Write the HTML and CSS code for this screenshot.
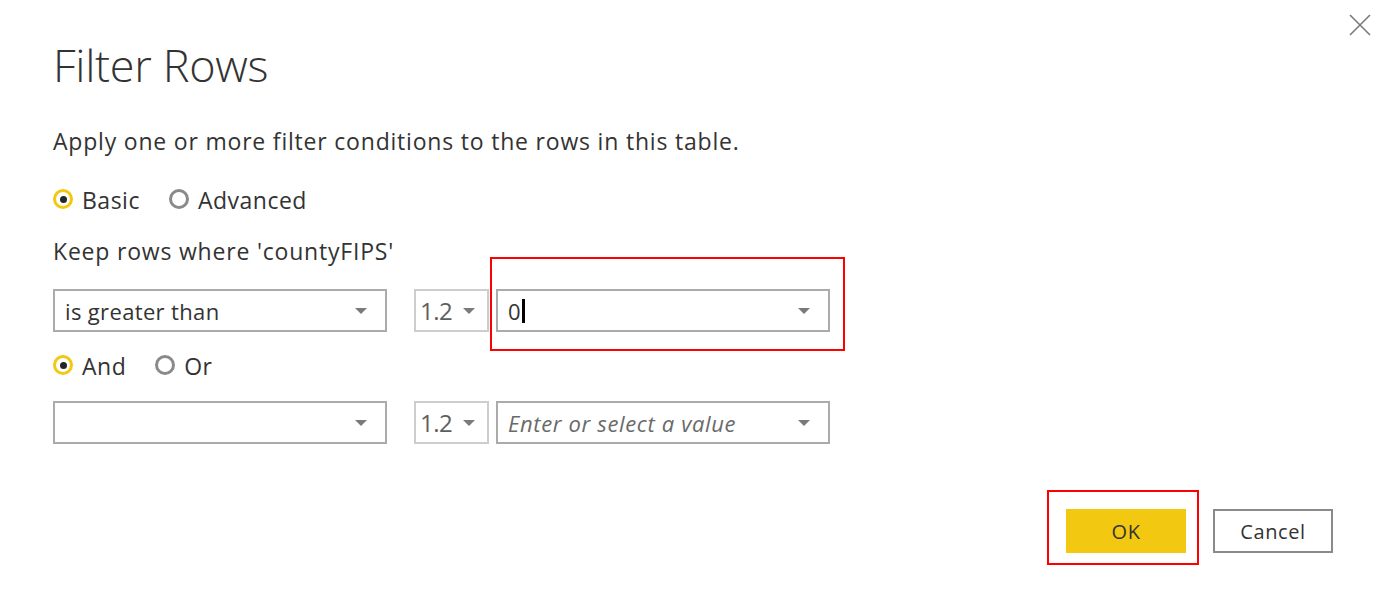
FILE: index.html
```html
<!DOCTYPE html>
<html lang="en">
<head>
<meta charset="utf-8">
<title>Filter Rows</title>
<link rel="stylesheet" href="styles.css">
</head>
<body>
<div class="dialog">
  <button class="close" aria-label="Close">
    <svg width="22" height="22" viewBox="0 0 22 22"><path d="M1 1 L21 21 M21 1 L1 21" stroke="#7a7a7a" stroke-width="1.6" fill="none"/></svg>
  </button>
  <h1 class="title">Filter Rows</h1>
  <p class="desc">Apply one or more filter conditions to the rows in this table.</p>
  <div class="radios first">
    <label class="radio"><span class="dot on"></span>Basic</label>
    <label class="radio"><span class="dot"></span>Advanced</label>
  </div>
  <p class="keep">Keep rows where 'countyFIPS'</p>
  <div class="cond-row">
    <div class="select op"><span class="val">is greater than</span><span class="caret"></span></div>
    <div class="select type"><span class="num">1.2</span><span class="caret"></span></div>
    <div class="value-wrap">
      <div class="select value"><span class="val">0</span><span class="cursor"></span><span class="caret"></span></div>
      <div class="mark mark-value"></div>
    </div>
  </div>
  <div class="radios second">
    <label class="radio"><span class="dot on"></span>And</label>
    <label class="radio"><span class="dot"></span>Or</label>
  </div>
  <div class="cond-row">
    <div class="select op"><span class="val"></span><span class="caret"></span></div>
    <div class="select type"><span class="num">1.2</span><span class="caret"></span></div>
    <div class="value-wrap">
      <div class="select value"><span class="val placeholder">Enter or select a value</span><span class="caret"></span></div>
    </div>
  </div>
  <div class="actions">
    <div class="ok-wrap">
      <button class="btn ok">OK</button>
      <div class="mark mark-ok"></div>
    </div>
    <button class="btn cancel">Cancel</button>
  </div>
</div>
</body>
</html>
```

FILE: styles.css
```css
* { box-sizing: border-box; }
html, body { margin: 0; padding: 0; background: #fff; }
body {
  width: 1383px;
  height: 599px;
  overflow: hidden;
  font-family: "Open Sans", "Noto Sans", sans-serif;
  color: #333;
}
.dialog {
  position: relative;
  padding: 0 50px 0 53px;
  display: flex;
  flex-direction: column;
}
.close {
  position: absolute;
  top: 14px;
  right: 12px;
  width: 22px;
  height: 22px;
  padding: 0;
  border: 0;
  background: none;
}
.close svg { display: block; }
.title {
  margin: 34px 0 0 0;
  font-weight: 300;
  font-size: 45px;
  line-height: 62px;
  color: #333;
  letter-spacing: -0.3px;
}
.desc {
  margin: 30px 0 0 0;
  font-size: 23px;
  line-height: 30px;
  letter-spacing: 0.8px;
}
.radios {
  display: flex;
  gap: 29px;
  font-size: 23px;
  line-height: 30px;
  letter-spacing: 0.5px;
}
.radios.first { margin-top: 29px; }
.radios.second { margin-top: 19px; }
.radio { display: flex; align-items: center; gap: 9px; }
.dot {
  width: 20px;
  height: 20px;
  border-radius: 50%;
  border: 3px solid #8a8a8a;
  display: flex;
  align-items: center;
  justify-content: center;
  margin-top: -2px;
}
.dot.on { border-color: #f2c811; }
.dot.on::after {
  content: "";
  width: 7px;
  height: 7px;
  border-radius: 50%;
  background: #252525;
}
.keep {
  margin: 21px 0 0 0;
  font-size: 23px;
  line-height: 30px;
  letter-spacing: 0.8px;
}
.cond-row {
  display: flex;
  align-items: center;
  margin-top: 23px;
}
.radios.second + .cond-row { margin-top: 20px; }
.select {
  height: 43px;
  border: 2px solid #ababab;
  display: flex;
  align-items: center;
  padding: 0 18px 0 10px;
  font-size: 22px;
  letter-spacing: 0.35px;
  background: #fff;
}
.select .val { white-space: nowrap; }
.select .caret { margin-left: auto; }
.select.op { width: 334px; }
.select.type {
  width: 75px;
  margin-left: 27px;
  border-color: #cdcdcd;
  padding: 0 12px 0 4px;
}
.select.type .num {
  color: #5e5e5e;
  font-size: 24px;
  letter-spacing: -0.5px;
}
.value-wrap { position: relative; margin-left: 7px; }
.select.value { width: 334px; }
.select.value .cursor {
  width: 3px;
  height: 24px;
  background: #000;
  margin-left: 1px;
  flex: 0 0 auto;
}
.placeholder { font-style: italic; color: #6a6a6a; letter-spacing: 0.65px; }
.caret {
  width: 0;
  height: 0;
  border-left: 6px solid transparent;
  border-right: 6px solid transparent;
  border-top: 6px solid #7a7a7a;
  flex: 0 0 auto;
}
.mark {
  position: absolute;
  border: 2px solid #ff0000;
  pointer-events: none;
}
.mark-value { left: -6px; right: -15px; top: -32px; bottom: -19px; }
.actions {
  display: flex;
  justify-content: flex-end;
  gap: 27px;
  margin-top: 65px;
}
.ok-wrap { position: relative; }
.btn {
  width: 120px;
  height: 44px;
  font-family: "Open Sans", "Noto Sans", sans-serif;
  font-size: 20px;
  letter-spacing: 0.6px;
  color: #333;
  display: flex;
  align-items: center;
  justify-content: center;
  padding: 0;
}
.ok { background: #f2c811; border: 0; }
.cancel { background: #fff; border: 2px solid #8a8a8a; }
.mark-ok { left: -19px; right: -13px; top: -19px; bottom: -12px; }
```
